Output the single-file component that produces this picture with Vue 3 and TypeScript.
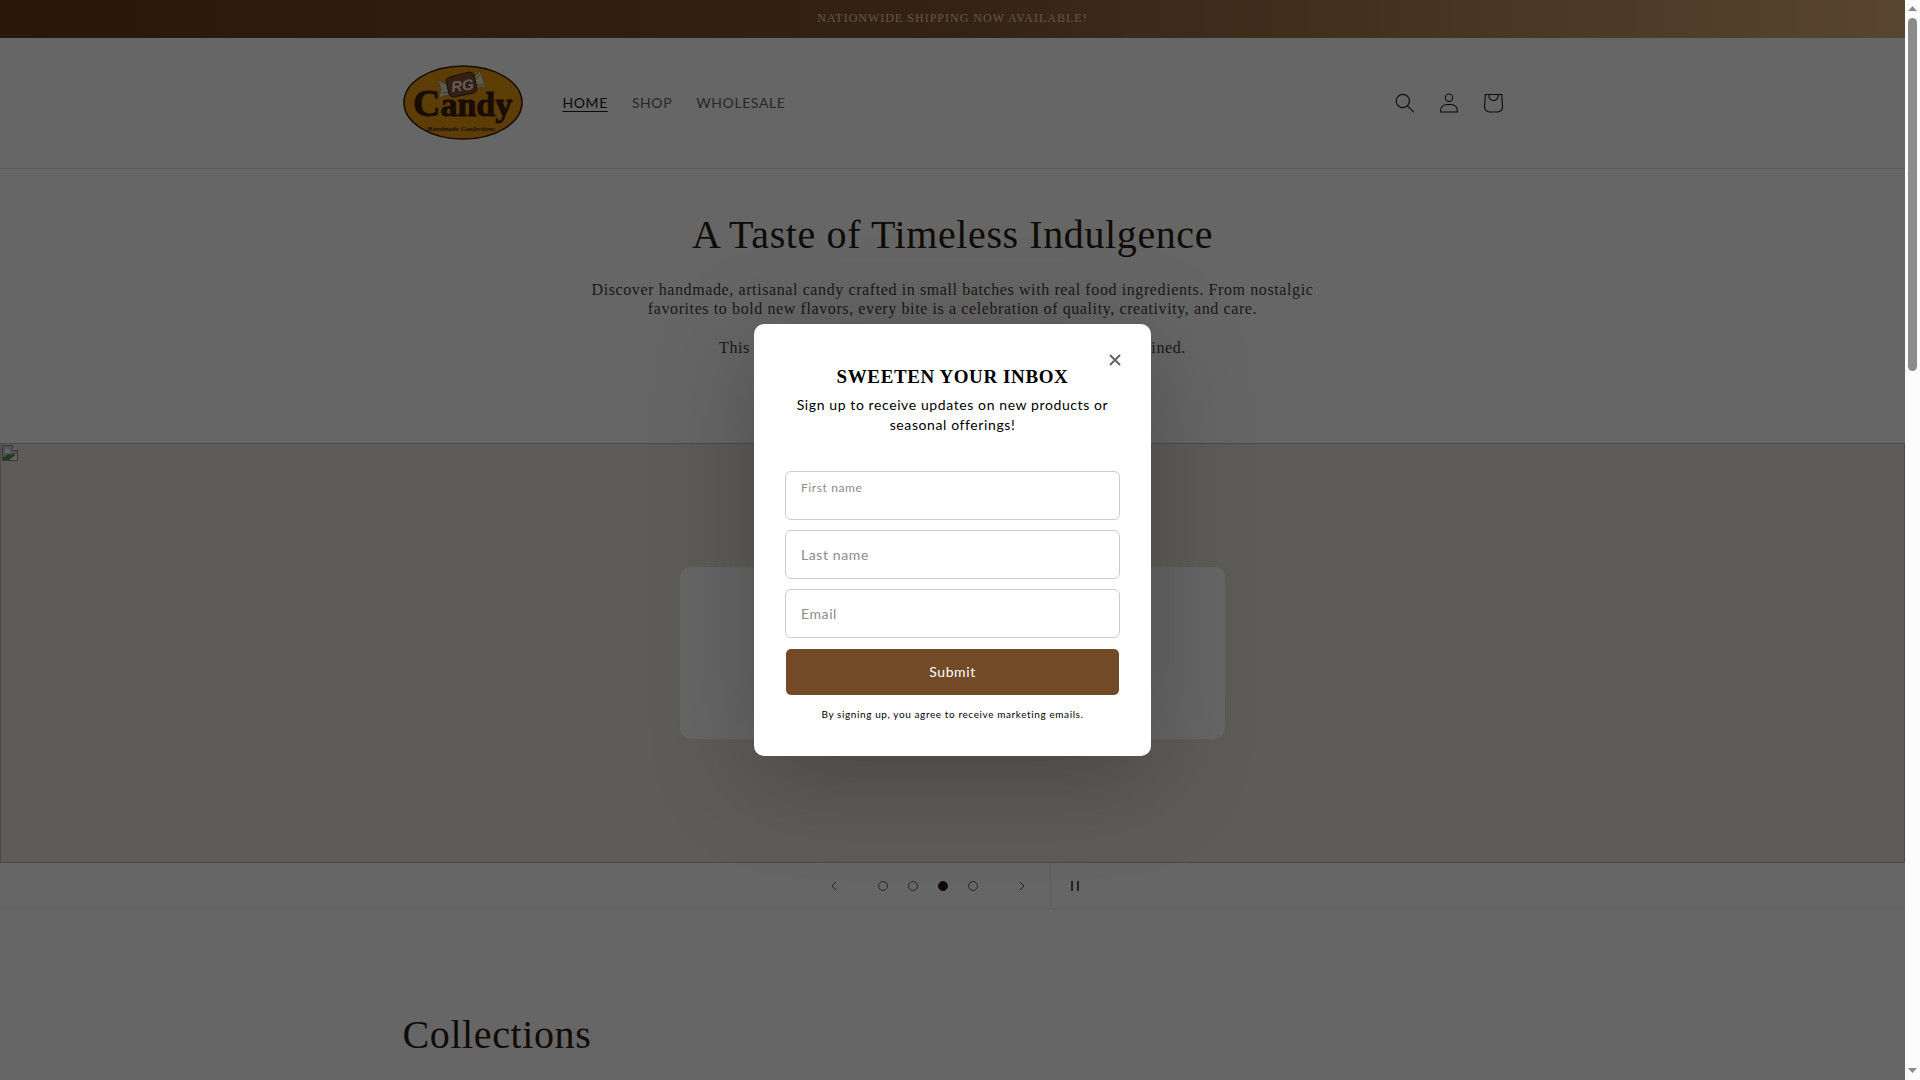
<script setup lang="ts">
import { ref } from 'vue'

interface NavLink {
  label: string
  current: boolean
}

const links: NavLink[] = [
  { label: 'Home', current: true },
  { label: 'Shop', current: false },
  { label: 'Wholesale', current: false },
]

const slides = [1, 2, 3, 4]
const activeSlide = ref(3)
const open = ref(true)
const firstName = ref('')
const lastName = ref('')
const email = ref('')
</script>

<template>
  <div class="window">
    <div class="page">
      <div class="announcement">Nationwide shipping now available!</div>

      <header class="header">
        <div class="header-inner container">
          <a class="logo" href="#" aria-label="RG Candy">
            <svg width="120" height="76" viewBox="0 0 120 76">
              <ellipse cx="60" cy="37.500" rx="59" ry="36.500" fill="#e69a10" stroke="#3f200c" stroke-width="1.600" />
              <path d="M46 19 L35 15 L38 24 L36 33 L41 31 L48 30 Z" fill="#e8dfb8" stroke="#8a7a50" stroke-width=".6" />
              <path d="M71 12 L77 6 L79 12 L83 23 L78 22 L72 24 Z" fill="#e8dfb8" stroke="#8a7a50" stroke-width=".6" />
              <path d="M46 20 L38 17 M47 27 L39 28 M72 15 L77 10 M73 20 L81 20" stroke="#8a7a50" stroke-width=".8" />
              <path d="M47 12 L66 7 Q70 7 71 10 L74 23 Q74 27 71 28 L51 32 Q47 32 46 29 L43 16 Q43 13 47 12Z" fill="#8a4c32" stroke="#3f200c" />
              <text class="logo-rg" x="48" y="26" transform="rotate(-8 58 20)">RG</text>
              <text class="logo-name" x="10" y="51"><tspan class="logo-initial">C</tspan>andy</text>
              <text class="logo-tag" x="24" y="66">Handmade Confections</text>
            </svg>
          </a>
          <nav class="nav">
            <a v-for="l in links" :key="l.label" href="#" :class="{ current: l.current }"><span>{{ l.label }}</span></a>
          </nav>
          <div class="tools">
            <button type="button" aria-label="Search">
              <svg width="20" height="20" viewBox="0 0 18 19"><path fill-rule="evenodd" d="M11.03 11.68A5.784 5.784 0 112.85 3.5a5.784 5.784 0 018.18 8.18zm.26 1.12a6.78 6.78 0 11.72-.7l5.4 5.4a.5.5 0 11-.71.7l-5.41-5.4z" /></svg>
            </button>
            <button type="button" aria-label="Log in">
              <svg width="20" height="20" viewBox="0 0 18 19"><path fill-rule="evenodd" d="M6 4.5a3 3 0 116 0 3 3 0 01-6 0zm3-4a4 4 0 100 8 4 4 0 000-8zm5.58 12.15c1.12.82 1.83 2.24 1.91 4.85H1.51c.08-2.6.79-4.03 1.9-4.85C4.66 11.75 6.5 11.5 9 11.5s4.35.26 5.58 1.15zM9 10.5c-2.5 0-4.65.24-6.17 1.35C1.27 12.98.5 14.93.5 18v.5h17V18c0-3.07-.77-5.02-2.33-6.15-1.52-1.1-3.67-1.35-6.17-1.35z" /></svg>
            </button>
            <button type="button" aria-label="Cart">
              <svg width="44" height="44" viewBox="0 0 40 40"><path fill-rule="evenodd" d="M15.75 11.8h-3.16l-.77 11.6a5 5 0 0 0 4.99 5.34h7.38a5 5 0 0 0 4.99-5.33L28.4 11.8zm0 1h-2.22l-.71 10.67a4 4 0 0 0 3.99 4.27h7.38a4 4 0 0 0 4-4.27l-.72-10.67h-2.22v.63a4.75 4.75 0 1 1-9.5 0zm8.5 0h-7.5v.63a3.75 3.75 0 1 0 7.5 0z" /></svg>
            </button>
          </div>
        </div>
      </header>

      <section class="intro">
        <h1>A Taste of Timeless Indulgence</h1>
        <p>
          Discover handmade, artisanal candy crafted in small batches with real food ingredients. From nostalgic
          favorites to bold new flavors, every bite is a celebration of quality, creativity, and care.
        </p>
        <p>This is not just candy. It is a joyful, timeless tradition, reimagined.</p>
      </section>

      <section class="slideshow" aria-label="Slideshow">
        <div class="slide">
          <svg class="missing" width="16" height="16" viewBox="0 0 16 16">
            <path d="M.5.5h10l5 5v10H.5z" fill="#c3cfe6" stroke="#8b8b8b" />
            <path d="M10.500.500v5h5" fill="#fff" stroke="#8b8b8b" />
            <path d="M3 6a2 2 0 0 1 4-1 2 2 0 0 1 1 3H3z" fill="#fff" />
            <path d="M1 15v-2l5-4 3 1 2-2 2 2-6 5z" fill="#4c9a3c" />
            <path d="M8 15l7-6v6z" fill="#fff" />
          </svg>
          <div class="slide-card"></div>
        </div>
        <div class="controls">
          <button type="button" class="ctl" aria-label="Previous slide">
            <svg width="6" height="10" viewBox="0 0 6 10"><path d="M5 1L1 5l4 4" /></svg>
          </button>
          <div class="dots">
            <button
              v-for="s in slides"
              :key="s"
              type="button"
              :class="{ active: s === activeSlide }"
              :aria-label="`Slide ${s}`"
              @click="activeSlide = s"
            ></button>
          </div>
          <button type="button" class="ctl" aria-label="Next slide">
            <svg width="6" height="10" viewBox="0 0 6 10"><path d="M1 1l4 4-4 4" /></svg>
          </button>
          <button type="button" class="ctl pause" aria-label="Pause slideshow">
            <svg width="8" height="10" viewBox="0 0 8 10"><path d="M1 0v10M7 0v10" stroke-width="2" /></svg>
          </button>
        </div>
      </section>

      <section class="collections container">
        <h2>Collections</h2>
      </section>

      <div v-if="open" class="overlay">
        <form class="modal" role="dialog" aria-labelledby="signup-title" @submit.prevent>
          <button type="button" class="close" aria-label="Close" @click="open = false">
            <svg width="12" height="12" viewBox="0 0 12 12"><path d="M1 1l10 10M11 1L1 11" /></svg>
          </button>
          <h2 id="signup-title">SWEETEN YOUR INBOX</h2>
          <p class="lead">Sign up to receive updates on new products or seasonal offerings!</p>
          <div class="fields">
            <div class="field raised">
              <label for="first">First name</label>
              <input id="first" v-model="firstName" type="text" />
            </div>
            <div class="field">
              <label for="last">Last name</label>
              <input id="last" v-model="lastName" type="text" />
            </div>
            <div class="field">
              <label for="email">Email</label>
              <input id="email" v-model="email" type="email" />
            </div>
            <button type="submit" class="submit">Submit</button>
          </div>
          <p class="legal">By signing up, you agree to receive marketing emails.</p>
        </form>
      </div>
    </div>

    <div class="scrollbar" aria-hidden="true">
      <svg width="9" height="5" viewBox="0 0 9 5"><path d="M0 5L4.500 0 9 5z" /></svg>
      <div class="track"><div class="thumb"></div></div>
      <svg width="9" height="5" viewBox="0 0 9 5"><path d="M0 0L4.500 5 9 0z" /></svg>
    </div>
  </div>
</template>

<style>
body {
  background: #fff;
}
</style>

<style scoped>
* {
  box-sizing: border-box;
}
h1, h2, p {
  margin: 0;
  font-weight: 400;
}
button {
  padding: 0;
  border: 0;
  background: none;
  font: inherit;
  letter-spacing: inherit;
}
.window {
  display: flex;
  height: 100vh;
  overflow: hidden;
  font-family: Lato, "Liberation Sans", sans-serif;
  letter-spacing: 0.6px;
}
.page {
  position: relative;
  flex: 1;
  overflow: hidden;
  color: #2b1c10;
}
.container {
  width: 100%;
  max-width: 1200px;
  margin: 0 auto;
  padding: 0 50px;
}
.announcement {
  height: 38px;
  background: linear-gradient(90deg, #6b3a14, #825734 50%, #deae76);
  color: #ecd6b4;
  font: 12px/36px "Liberation Serif", serif;
  letter-spacing: 1px;
  text-align: center;
  text-transform: uppercase;
}
.header {
  border-bottom: 1px solid #e4e2e0;
}
.header-inner {
  display: flex;
  align-items: center;
  height: 130px;
}
.logo {
  display: flex;
}
.logo-rg {
  font: italic bold 15px "Liberation Sans", sans-serif;
  letter-spacing: 0;
  fill: #f2ecd8;
}
.logo-name {
  font: bold 34px "Liberation Serif", serif;
  letter-spacing: 0;
  fill: #3f200c;
  stroke: #3f200c;
}
.logo-initial {
  font-size: 38px;
}
.logo-tag {
  font: italic bold 7px "Liberation Serif", serif;
  letter-spacing: 0;
  fill: #3f200c;
}
.nav {
  display: flex;
  gap: 24px;
  margin-left: 40px;
  font-size: 14px;
  line-height: 20px;
  text-transform: uppercase;
}
.nav a {
  color: #6a635c;
  text-decoration: none;
}
.nav a.current {
  color: #24170c;
  text-decoration: underline;
  text-underline-offset: 3px;
}
.tools {
  display: flex;
  margin-left: auto;
  margin-right: -12px;
}
.tools button {
  display: grid;
  place-items: center;
  width: 44px;
  height: 44px;
}
.tools svg {
  fill: #24170c;
}
.intro {
  height: 274px;
  padding: 40px 20px 0;
  font-family: "Liberation Serif", serif;
  text-align: center;
}
h1, .collections h2 {
  font-family: "Liberation Serif", serif;
  font-size: 40px;
  line-height: 52px;
}
.intro p {
  max-width: 726px;
  margin: 0 auto 20px;
  font-size: 16px;
  line-height: 19px;
  color: #4c4036;
}
.intro h1 {
  margin-bottom: 19px;
}
.slide {
  position: relative;
  display: grid;
  place-items: center;
  height: 420px;
  border: 1px solid #bdb7b0;
  background: #ebe5df;
}
.missing {
  position: absolute;
  top: 1px;
  left: 1px;
}
.slide-card {
  width: 545px;
  height: 172px;
  border-radius: 10px;
  background: #fff;
}
.controls {
  display: flex;
  justify-content: center;
  height: 46px;
  padding-left: 6px;
  border-bottom: 1px solid #ebe9e7;
}
.ctl {
  display: grid;
  place-items: center;
  width: 44px;
}
.ctl svg {
  fill: none;
  stroke: #5c534b;
}
.dots {
  display: flex;
  align-items: center;
  gap: 20px;
  padding: 0 22px;
}
.dots button {
  width: 10px;
  height: 10px;
  border: 1px solid #6a635c;
  border-radius: 50%;
}
.dots .active {
  border-color: #2b120c;
  background: #2b120c;
}
.pause {
  width: 50px;
  margin-left: 6px;
  border-left: 1px solid #ebe9e7;
}
.collections {
  padding-top: 100px;
}
.overlay {
  position: absolute;
  inset: 0;
  display: grid;
  place-items: center;
  background: rgba(0, 0, 0, 0.6);
}
.modal {
  position: relative;
  width: 397px;
  padding: 40px 32px 34px;
  border-radius: 10px;
  background: #fff;
  box-shadow: 0 20px 100px rgba(0, 0, 0, 0.25);
  color: #000;
  text-align: center;
}
.modal h2 {
  font: bold 19px/26px "Liberation Serif", serif;
}
.close {
  position: absolute;
  top: 20px;
  right: 20px;
  display: grid;
  place-items: center;
  width: 32px;
  height: 32px;
}
.close svg {
  fill: none;
  stroke: #666;
  stroke-width: 2;
}
.lead {
  padding-top: 5px;
  font-size: 14px;
  line-height: 20px;
}
.fields {
  display: flex;
  flex-direction: column;
  gap: 12px;
  padding: 37px 0 11px;
}
.field {
  position: relative;
  height: 47px;
}
.field input {
  width: 100%;
  height: 100%;
  padding: 14px 16px 0;
  border: 0;
  border-radius: 5px;
  outline: 1px solid #ccc;
  background: #fff;
  font: inherit;
  font-size: 14px;
}
.field label {
  position: absolute;
  top: 0;
  left: 15px;
  font-size: 14px;
  line-height: 47px;
  color: #8c8c8c;
}
.field.raised label {
  font-size: 12px;
  line-height: 32px;
}
.submit {
  height: 46px;
  padding-bottom: 2px;
  border-radius: 5px;
  background: #734a26;
  color: #fff;
  font-size: 14px;
}
.legal {
  font-size: 10px;
  line-height: 16px;
}
.scrollbar {
  display: flex;
  flex-direction: column;
  align-items: center;
  width: 15px;
  padding: 6px 0 7px;
  background: #fcfcfc;
}
.scrollbar svg {
  fill: #8b8b8b;
}
.track {
  flex: 1;
  padding-top: 7px;
}
.thumb {
  width: 9px;
  height: 353px;
  border-radius: 5px;
  background: #8b8b8b;
}
</style>
